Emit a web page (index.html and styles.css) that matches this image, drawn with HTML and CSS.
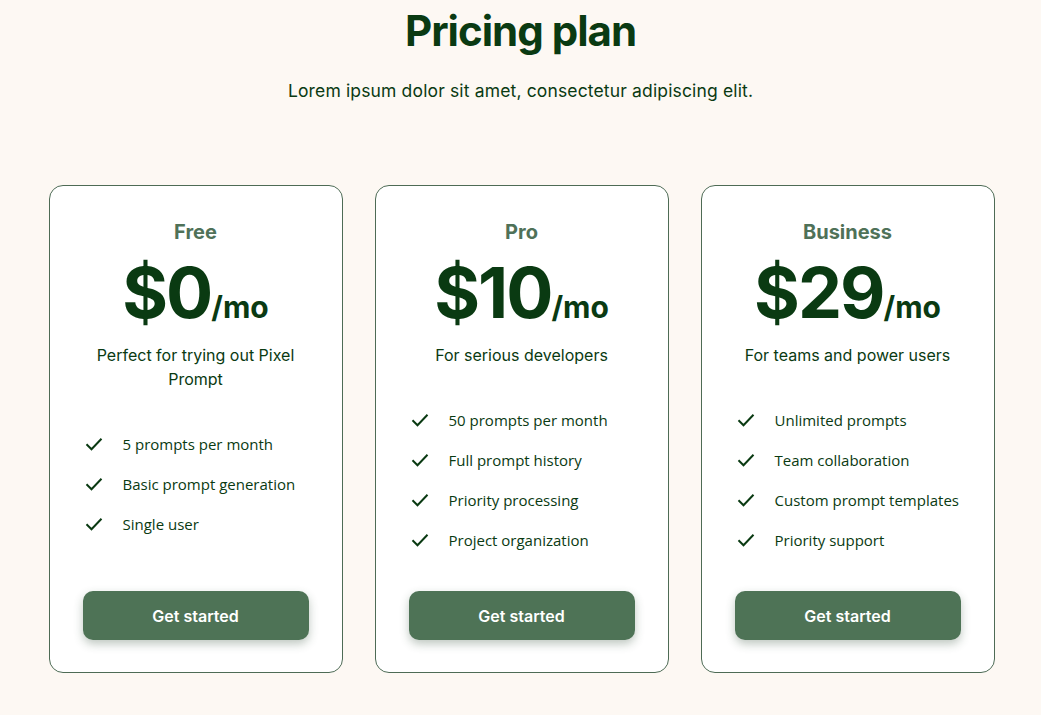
FILE: index.html
```html
<!DOCTYPE html>
<html lang="en">
<head>
    <link rel="stylesheet" href="styles.css">
    <meta charset="utf-8" />
    <meta name="viewport" content="width=device-width, initial-scale=1.0">
    <title>Pricing plan</title>
</head>
<body>

<section class="pricing">
    <h1>Pricing plan</h1>
    <p class="subtitle">Lorem ipsum dolor sit amet, consectetur adipiscing elit.</p>

    <div class="plans">
        <!-- Free plan -->
        <div class="plan">
            <h2>Free</h2>
            <div class="price">$0<span>/mo</span></div>
            <p class="desc">Perfect for trying out Pixel Prompt</p>
            <ul class="features">
                <li><svg viewBox="0 0 18 14"><path d="M1.5 7.2l5 5L16.5 1.8"/></svg>5 prompts per month</li>
                <li><svg viewBox="0 0 18 14"><path d="M1.5 7.2l5 5L16.5 1.8"/></svg>Basic prompt generation</li>
                <li><svg viewBox="0 0 18 14"><path d="M1.5 7.2l5 5L16.5 1.8"/></svg>Single user</li>
            </ul>
            <button>Get started</button>
        </div>

        <!-- Pro plan -->
        <div class="plan">
            <h2>Pro</h2>
            <div class="price">$10<span>/mo</span></div>
            <p class="desc">For serious developers</p>
            <ul class="features">
                <li><svg viewBox="0 0 18 14"><path d="M1.5 7.2l5 5L16.5 1.8"/></svg>50 prompts per month</li>
                <li><svg viewBox="0 0 18 14"><path d="M1.5 7.2l5 5L16.5 1.8"/></svg>Full prompt history</li>
                <li><svg viewBox="0 0 18 14"><path d="M1.5 7.2l5 5L16.5 1.8"/></svg>Priority processing</li>
                <li><svg viewBox="0 0 18 14"><path d="M1.5 7.2l5 5L16.5 1.8"/></svg>Project organization</li>
            </ul>
            <button>Get started</button>
        </div>

        <!-- Business plan -->
        <div class="plan">
            <h2>Business</h2>
            <div class="price">$29<span>/mo</span></div>
            <p class="desc">For teams and power users</p>
            <ul class="features">
                <li><svg viewBox="0 0 18 14"><path d="M1.5 7.2l5 5L16.5 1.8"/></svg>Unlimited prompts</li>
                <li><svg viewBox="0 0 18 14"><path d="M1.5 7.2l5 5L16.5 1.8"/></svg>Team collaboration</li>
                <li><svg viewBox="0 0 18 14"><path d="M1.5 7.2l5 5L16.5 1.8"/></svg>Custom prompt templates</li>
                <li><svg viewBox="0 0 18 14"><path d="M1.5 7.2l5 5L16.5 1.8"/></svg>Priority support</li>
            </ul>
            <button>Get started</button>
        </div>
    </div>
</section>

</body>
</html>
```

FILE: styles.css
```css
body {
    margin: 0;
    background: #fdf8f3;
    font-family: 'Inter', 'Noto Sans', sans-serif;
    color: #0a3a12;
}

.pricing {
    padding-top: 6px;
    text-align: center;
}

h1 {
    margin: 0;
    font-size: 42px;
    line-height: 50px;
    font-weight: 700;
    letter-spacing: -1px;
}

.subtitle {
    margin: 23px 0 0;
    font-size: 17.5px;
    line-height: 24px;
    letter-spacing: 0.15px;
}

.plans {
    display: flex;
    justify-content: center;
    gap: 32px;
    margin-top: 82px;
    padding-left: 2px;
}

.plan {
    width: 294px;
    height: 488px;
    box-sizing: border-box;
    padding: 32px 33px 32px;
    background: #fff;
    border: 1px solid #4e6b55;
    border-radius: 14px;
    display: flex;
    flex-direction: column;
}

.plan h2 {
    margin: 0;
    font-size: 20px;
    line-height: 28px;
    font-weight: 700;
    color: #4f7158;
}

.price {
    margin-top: 12px;
    font-size: 70px;
    line-height: 1;
    font-weight: 700;
    letter-spacing: -2px;
}

.price span {
    font-size: 30px;
    letter-spacing: 0;
}

.desc {
    margin: 15px 0 0;
    font-size: 16px;
    line-height: 24px;
}

.features {
    list-style: none;
    margin: 33px 0 0;
    padding: 0 0 0 2px;
    text-align: left;
    font-family: 'Open Sans', 'Noto Sans', sans-serif;
    font-size: 15px;
    white-space: nowrap;
}

.features li {
    display: flex;
    align-items: center;
    gap: 20px;
    height: 40px;
}

.features svg {
    width: 18px;
    height: 14px;
    fill: none;
    stroke: #0a3a12;
    stroke-width: 2;
    flex-shrink: 0;
}

/* button sits at the bottom of every card */
.plan button {
    margin-top: auto;
    height: 49px;
    border: none;
    border-radius: 10px;
    background: #4e7356;
    color: #fff;
    font-family: 'Inter', sans-serif;
    font-size: 16px;
    font-weight: 600;
    box-shadow: 0 4px 10px rgba(40, 70, 45, 0.3);
    cursor: pointer;
}
```
